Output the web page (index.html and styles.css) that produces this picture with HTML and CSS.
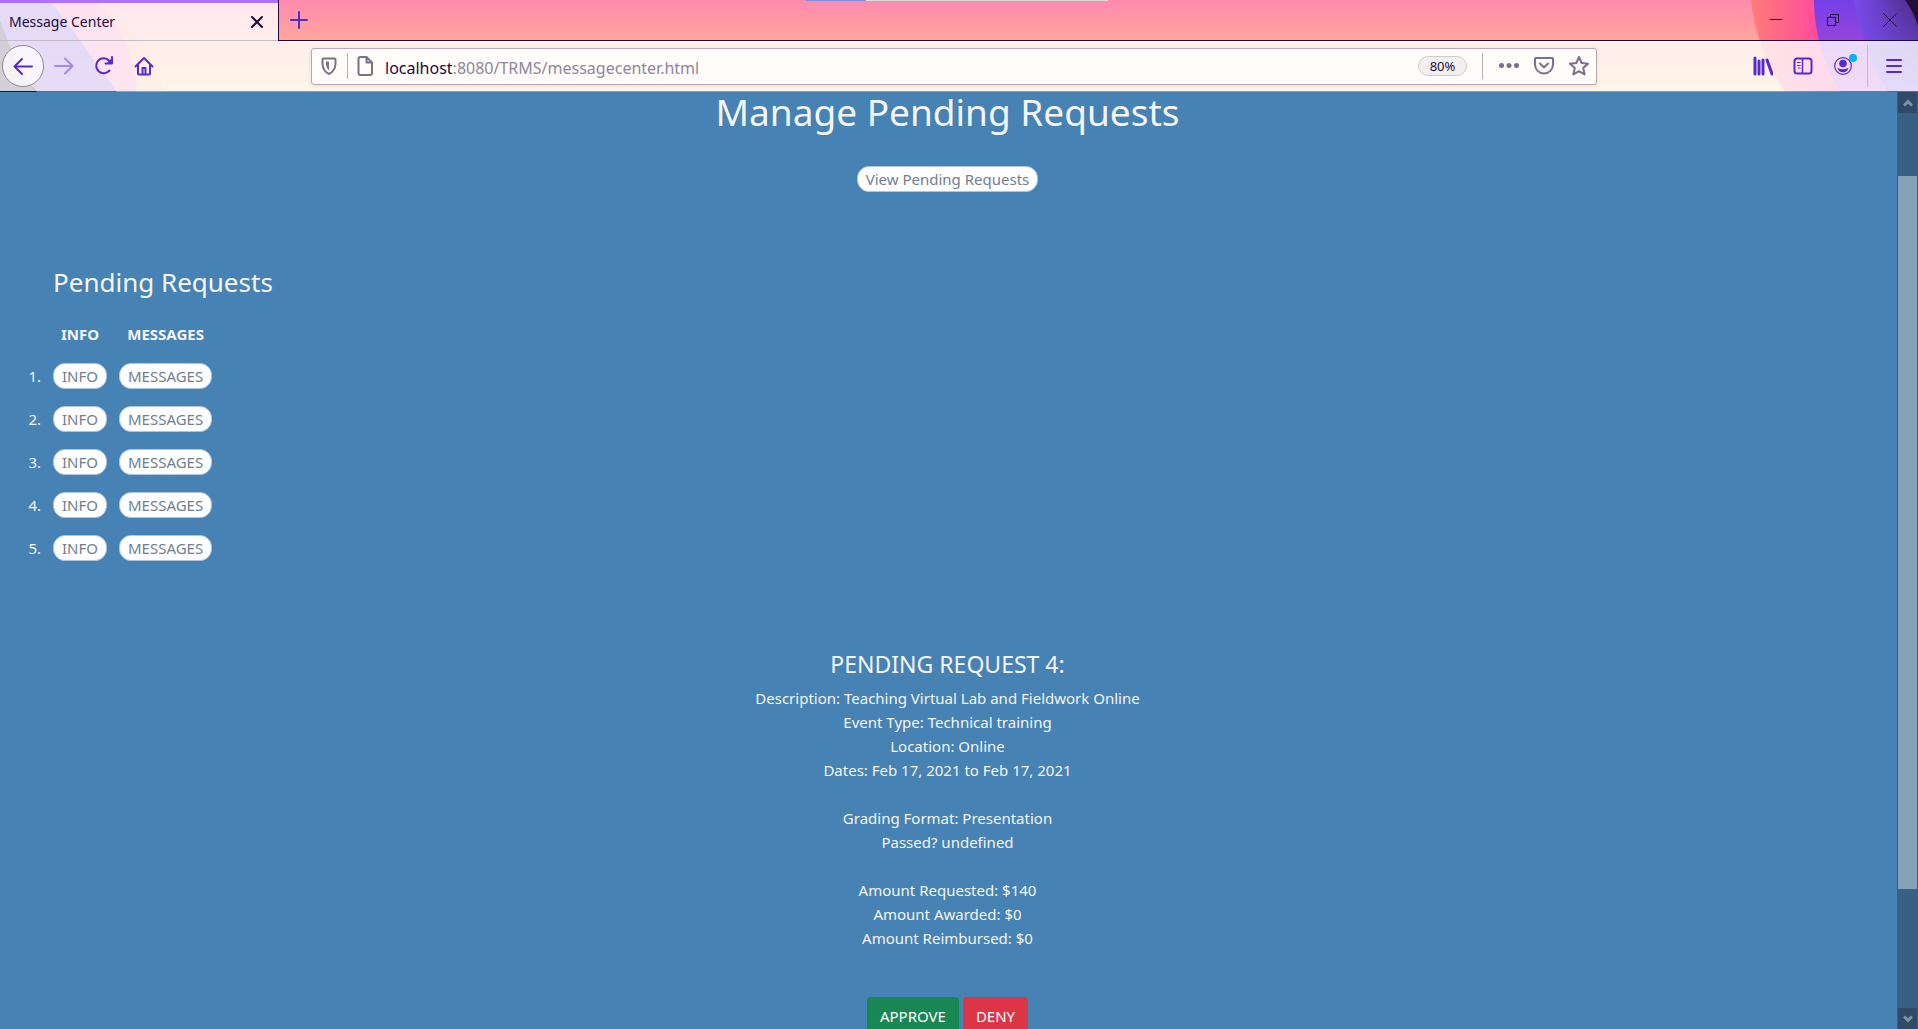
FILE: index.html
```
<!DOCTYPE html>
<html lang="en">
<head>
<meta charset="utf-8">
<title>Message Center</title>
<link rel="stylesheet" href="styles.css">
</head>
<body>
<header class="browser">
  <svg class="art art-left" width="180" height="92" viewBox="0 0 180 92" aria-hidden="true">
    <path fill="#ff9a60" fill-opacity=".35" d="M0 0H98Q152 44 165 92H0Z"/>
    <path fill="#f95fc4" fill-opacity=".7" d="M0 0H95Q136 42 137 92H0Z"/>
    <path fill="#6a48dc" fill-opacity=".85" d="M0 0H50Q84 45 117 92H0Z"/>
    <path fill="#1f1033" d="M0 20Q14 62 37 92H0Z"/>
  </svg>
  <svg class="art art-right" width="178" height="92" viewBox="0 0 178 92" aria-hidden="true">
    <defs>
      <linearGradient id="g-orange"><stop offset="0" stop-color="#ff7c78"/><stop offset=".4" stop-color="#ff4c9c"/><stop offset="1" stop-color="#ff4aa2"/></linearGradient>
      <linearGradient id="g-violet" x2="0" y2="1"><stop offset="0" stop-color="#7440e8"/><stop offset="1" stop-color="#c04ac8"/></linearGradient>
      <linearGradient id="g-indigo"><stop offset="0" stop-color="#7a4cee"/><stop offset="1" stop-color="#4a2a80"/></linearGradient>
      <linearGradient id="g-indigo-fade" x2="0" y2="1"><stop offset="0" stop-color="#7a4cee" stop-opacity="0"/><stop offset="1" stop-color="#7a4cee"/></linearGradient>
    </defs>
    <path fill="url(#g-orange)" d="M11 0Q16 48 45 92H178V0Z"/>
    <path fill="url(#g-violet)" d="M74 0Q74 48 100 92H178V0Z"/>
    <path fill="url(#g-indigo)" d="M114 0Q122 48 148 92H178V0Z"/>
    <path fill="url(#g-indigo-fade)" d="M114 0Q122 48 148 92H178V0Z"/>
    <path fill="#201038" d="M165 0Q174 12 178 26V0Z"/>
  </svg>
  <div class="progress" aria-hidden="true"></div>

  <div class="tabs">
    <div class="tab">
      <span class="tab-title">Message Center</span>
      <button class="tab-close" aria-label="Close tab"><svg width="14" height="14" viewBox="0 0 14 14"><path d="M2 2L12 12M12 2L2 12" stroke="#1f0a3c" stroke-width="2" stroke-linecap="round"/></svg></button>
    </div>
    <button class="new-tab" aria-label="New tab"><svg width="18" height="18" viewBox="0 0 18 18"><path d="M9 1V17M1 9H17" stroke="#5a29cb" stroke-width="2" stroke-linecap="round"/></svg></button>
    <div class="window-controls">
      <button aria-label="Minimize"><svg width="14" height="14" viewBox="0 0 14 14"><path d="M1 6.500H13" stroke="#1f0a3c"/></svg></button>
      <button aria-label="Restore"><svg width="14" height="14" viewBox="0 0 14 14"><path d="M1.500 4.500H9.500V12.500H1.500ZM4.500 4V1.500H12.500V9.500H10" fill="none" stroke="#1f0a3c"/></svg></button>
      <button aria-label="Close"><svg width="14" height="14" viewBox="0 0 14 14"><path d="M.5 .5L13.500 13.500M13.500 .5L.5 13.500" stroke="#1f0a3c"/></svg></button>
    </div>
  </div>

  <div class="toolbar">
    <button class="tool back" aria-label="Back"><svg width="20" height="20" viewBox="0 0 20 20"><path d="M19 10.500H2M9 3L1.500 10.500L9 18" class="line"/></svg></button>
    <button class="tool forward" aria-label="Forward"><svg width="20" height="20" viewBox="0 0 20 20"><path d="M1 10H18M11 2.500L18.500 10L11 17.500" class="line"/></svg></button>
    <button class="tool" aria-label="Reload"><svg width="20" height="20" viewBox="0 0 20 20"><path d="M15.500 14.500A7.500 7.500 0 1 1 15.500 5L17.500 7.500M18 1V7.500H11.500" class="line"/><path d="M18 2V8H12Z" fill="#5a29cb"/></svg></button>
    <button class="tool" aria-label="Home"><svg width="20" height="20" viewBox="0 0 20 20"><path d="M1.500 10.500L10 2L18.500 10.500M4 9V17.500Q4 18.500 5 18.500H15Q16 18.500 16 17.500V9" class="line"/><path d="M8.500 18V12H11.500V18" class="line"/></svg></button>
    <div class="address">
      <svg class="shield" width="18" height="20" viewBox="0 0 18 20"><path d="M3.500 2.500H14.500Q15.500 2.500 15.500 3.500V8Q15 15 9 18Q3 15 2.500 8V3.500Q2.500 2.500 3.500 2.500Z" class="stroke"/><path d="M9 5.500V14.500Q6.500 12.500 6 8.500V5.500Z" fill="#7b7088"/></svg>
      <span class="divider"></span>
      <svg class="page" width="18" height="22" viewBox="0 0 18 22"><path d="M4.500 2H10.500L16 7.500V18Q16 20 14 20H4.500Q2.500 20 2.500 18V4Q2.500 2 4.500 2ZM10.500 2V7.500H16" class="stroke"/></svg>
      <div class="url-text"><span class="host">localhost</span>:8080/TRMS/messagecenter.html</div>
      <button class="zoom-level">80%</button>
      <span class="divider"></span>
      <button class="mini" aria-label="Page actions"><svg width="22" height="22" viewBox="0 0 22 22" fill="#7b7088"><circle cx="3.500" cy="10.500" r="2.500"/><circle cx="11" cy="10.500" r="2.500"/><circle cx="18.500" cy="10.500" r="2.500"/></svg></button>
      <button class="mini" aria-label="Save to Pocket"><svg width="22" height="22" viewBox="0 0 22 22"><path d="M3 3H19Q20 3 20 4V9.500A9 9 0 0 1 2 9.500V4Q2 3 3 3ZM7 8.500L11 12.500L15 8.500" class="stroke"/></svg></button>
      <button class="mini" aria-label="Bookmark"><svg width="22" height="22" viewBox="0 0 22 22"><path d="M11 2L13.600 8L20 8.700L15.200 13L16.600 19.500L11 16.200L5.400 19.500L6.800 13L2 8.700L8.400 8Z" class="stroke"/></svg></button>
    </div>
    <div class="extras">
      <button class="tool" aria-label="Library"><svg width="20" height="20" viewBox="0 0 20 20"><path d="M2 2V18M6 5V18M10 4V18M14 4L19 18" class="line heavy"/></svg></button>
      <button class="tool" aria-label="Sidebar"><svg width="20" height="20" viewBox="0 0 20 20"><rect x="1.500" y="2.500" width="17" height="15" rx="2.500" class="line"/><path d="M9.500 3V17" stroke="#5a29cb" stroke-width="1.500"/><path d="M4 6.500H7.500M4 9.500H7.500M5 12H7.500" stroke="#5a29cb"/></svg></button>
      <button class="tool account" aria-label="Account"><svg width="20" height="20" viewBox="0 0 20 20"><circle cx="10" cy="10" r="8.300" fill="none" stroke="#5a29cb" stroke-width="1.200"/><circle cx="10" cy="7.500" r="3.800" fill="#5a29cb"/><path d="M4.500 11.800Q10 14.800 15.500 11.800Q14.500 16.300 10 16.300Q5.500 16.300 4.500 11.800Z" fill="#5a29cb"/></svg></button>
      <span class="edge"></span>
      <button class="tool" aria-label="Menu"><svg width="20" height="20" viewBox="0 0 20 20"><path d="M3 4H17M3 10H17M3 16H17" class="line"/></svg></button>
    </div>
  </div>
</header>

<div class="viewport">
  <main class="page-body">
    <section class="manage">
      <h1>Manage Pending Requests</h1>
      <button class="pill">View Pending Requests</button>
    </section>

    <section class="pending">
      <h2>Pending Requests</h2>
      <table>
        <thead><tr><td></td><th scope="col">INFO</th><th scope="col">MESSAGES</th></tr></thead>
        <tbody>
          <tr><td>1.</td><td><button class="pill">INFO</button></td><td><button class="pill">MESSAGES</button></td></tr>
          <tr><td>2.</td><td><button class="pill">INFO</button></td><td><button class="pill">MESSAGES</button></td></tr>
          <tr><td>3.</td><td><button class="pill">INFO</button></td><td><button class="pill">MESSAGES</button></td></tr>
          <tr><td>4.</td><td><button class="pill selected">INFO</button></td><td><button class="pill">MESSAGES</button></td></tr>
          <tr><td>5.</td><td><button class="pill">INFO</button></td><td><button class="pill">MESSAGES</button></td></tr>
        </tbody>
      </table>
    </section>

    <section class="detail">
      <h3>PENDING REQUEST 4:</h3>
      <p>Description: Teaching Virtual Lab and Fieldwork Online<br>Event Type: Technical training<br>Location: Online<br>Dates: Feb 17, 2021 to Feb 17, 2021</p>
      <p>Grading Format: Presentation<br>Passed? undefined</p>
      <p>Amount Requested: $140<br>Amount Awarded: $0<br>Amount Reimbursed: $0</p>
      <div class="decision">
        <button class="btn approve">APPROVE</button>
        <button class="btn deny">DENY</button>
      </div>
    </section>
  </main>
  <div class="scrollbar" aria-hidden="true">
    <div class="arrow"><svg width="10" height="10" viewBox="0 0 10 10"><path d="M1 7.500L5 3.500L9 7.500" fill="none" stroke="#7f93a6" stroke-width="3"/></svg></div>
    <div class="track"><div class="thumb"></div></div>
    <div class="arrow"><svg width="10" height="10" viewBox="0 0 10 10"><path d="M1 2.500L5 6.500L9 2.500" fill="none" stroke="#7f93a6" stroke-width="3"/></svg></div>
  </div>
</div>
</body>
</html>
```
FILE: styles.css
```
* { box-sizing: border-box; }
html, body { height: 100%; }
body {
  margin: 0;
  display: flex;
  flex-direction: column;
  overflow: hidden;
  background: #4682b4;
  color: #f5f5f5;
  font: 15px/24px "Noto Sans", "Open Sans", sans-serif;
}
button { font: inherit; padding: 0; margin: 0; border: 0; background: none; }
svg { display: block; }
.line { fill: none; stroke: #5a29cb; stroke-width: 2; stroke-linecap: round; stroke-linejoin: round; }
.heavy { stroke-width: 3; }
.stroke { fill: none; stroke: #7b7088; stroke-width: 2; stroke-linejoin: round; stroke-linecap: round; }

/* Browser frame */
.browser {
  position: relative;
  isolation: isolate;
  flex: none;
  color: #1f0a3c;
  background: linear-gradient(#ff8ab0, #ffa79b 41px, #ffcf90);
  border-bottom: 1px solid #b98f84;
}
.art { position: absolute; top: 0; z-index: -1; }
.art-left { left: 0; }
.art-right { right: 0; }
.progress {
  position: absolute;
  top: 0;
  left: 42%;
  width: 302px;
  height: 1px;
  background: linear-gradient(90deg, #8090e0 60px, #dcdcdc 60px);
}
.tabs { display: flex; height: 41px; }
.tab {
  flex: none;
  width: 278px;
  display: flex;
  align-items: center;
  justify-content: space-between;
  padding: 0 14px 0 9px;
  border-top: 3px solid #ae70ff;
  border-bottom: 1px solid #c5bcc6;
  background: rgba(255, 255, 255, .8);
}
.tab-title { font-size: 14px; line-height: 20px; }
.new-tab {
  width: 41px;
  display: grid;
  place-items: center;
  border-left: 1px solid #1f0a3c;
  border-bottom: 1px solid #1f0a3c;
}
.window-controls {
  flex: 1;
  display: flex;
  justify-content: flex-end;
  align-items: center;
  gap: 43px;
  padding-right: 21px;
  border-bottom: 1px solid #1f0a3c;
}
.toolbar {
  display: flex;
  align-items: center;
  height: 50px;
  padding: 0 4px 0 2px;
  background: rgba(255, 255, 255, .8);
}
.tool {
  position: relative;
  flex: none;
  width: 40px;
  height: 40px;
  display: grid;
  place-items: center;
}
.back {
  width: 42px;
  height: 42px;
  border: 1px solid #8f8795;
  border-radius: 50%;
  background: rgba(255, 255, 255, .75);
}
.forward { opacity: .45; }
.address {
  flex: 1;
  display: flex;
  align-items: center;
  height: 37px;
  margin-left: 147px;
  padding-left: 8px;
  border: 1px solid #b8a8b4;
  border-radius: 3px;
  background: #fffcfa;
  box-shadow: 0 1px 4px rgba(90, 40, 60, .12);
}
.divider { width: 1px; height: 26px; background: #b8aebc; }
.shield { margin-right: 9px; }
.page { margin: 0 11px 0 8px; }
.url-text { flex: 1; padding-top: 3px; font-size: 16px; line-height: 24px; color: #8f8799; }
.host { color: #1f0a3c; }
.zoom-level {
  width: 49px;
  height: 20px;
  margin-right: 15px;
  border: 1px solid #cfcccd;
  border-radius: 10px;
  background: #f2efee;
  color: #1f0a3c;
  font-size: 13px;
  line-height: 18px;
}
.mini { width: 35px; display: grid; place-items: center; }
.divider + .mini { margin-left: 8px; }
.extras { display: flex; align-items: center; margin-left: 146px; }
.account::after {
  content: "";
  position: absolute;
  top: 8px;
  right: 6px;
  width: 8px;
  height: 8px;
  border-radius: 50%;
  background: #00b3f4;
}
.edge { width: 1px; height: 42px; margin: 0 6px 0 4px; background: #c9b3cc; }

/* Page */
.viewport { flex: 1; min-height: 0; display: flex; }
.page-body { flex: 1; padding-right: 2px; overflow: hidden; }
h1, h2, h3, p { margin: 0; font-weight: 400; }
.manage { text-align: center; }
h1 { font-size: 37px; line-height: 40px; margin-bottom: 34px; }
.pill {
  height: 26px;
  padding: 0 8px;
  border: 1px solid #b0c4de;
  border-radius: 12px;
  background: #fff;
  color: #708090;
  line-height: 24px;
  vertical-align: top;
}
.selected { outline: 1px dotted #5f83a6; }
.pending { padding: 73px 0 0 27px; }
h2 { padding-left: 26px; font-size: 26px; line-height: 34px; }
table { margin-top: 14px; border-collapse: collapse; }
th, td { padding: 8px 6px 9px; line-height: 26px; text-align: center; }
th { padding-bottom: 8px; }
td:first-child { padding: 0 6px 2px 0; width: 20px; text-align: right; }
.detail { padding-top: 79px; text-align: center; }
h3 { font-size: 23px; line-height: 30px; margin-bottom: 7px; }
p + p { margin-top: 24px; }
.decision { display: flex; justify-content: center; gap: 4px; margin-top: 47px; }
.btn { height: 38px; padding: 0 13px; border-radius: 4px; color: #fff; }
.approve { background: #198754; }
.deny { background: #dc3545; }

/* Scrollbar */
.scrollbar {
  flex: none;
  width: 21px;
  display: flex;
  flex-direction: column;
  padding: 0 1px;
  background: #386084;
}
.arrow { height: 21px; display: grid; place-items: center; background: #2e4a66; }
.track { flex: 1; padding: 63px 0 119px; }
.thumb { height: 100%; background: #87a1b6; }
```
